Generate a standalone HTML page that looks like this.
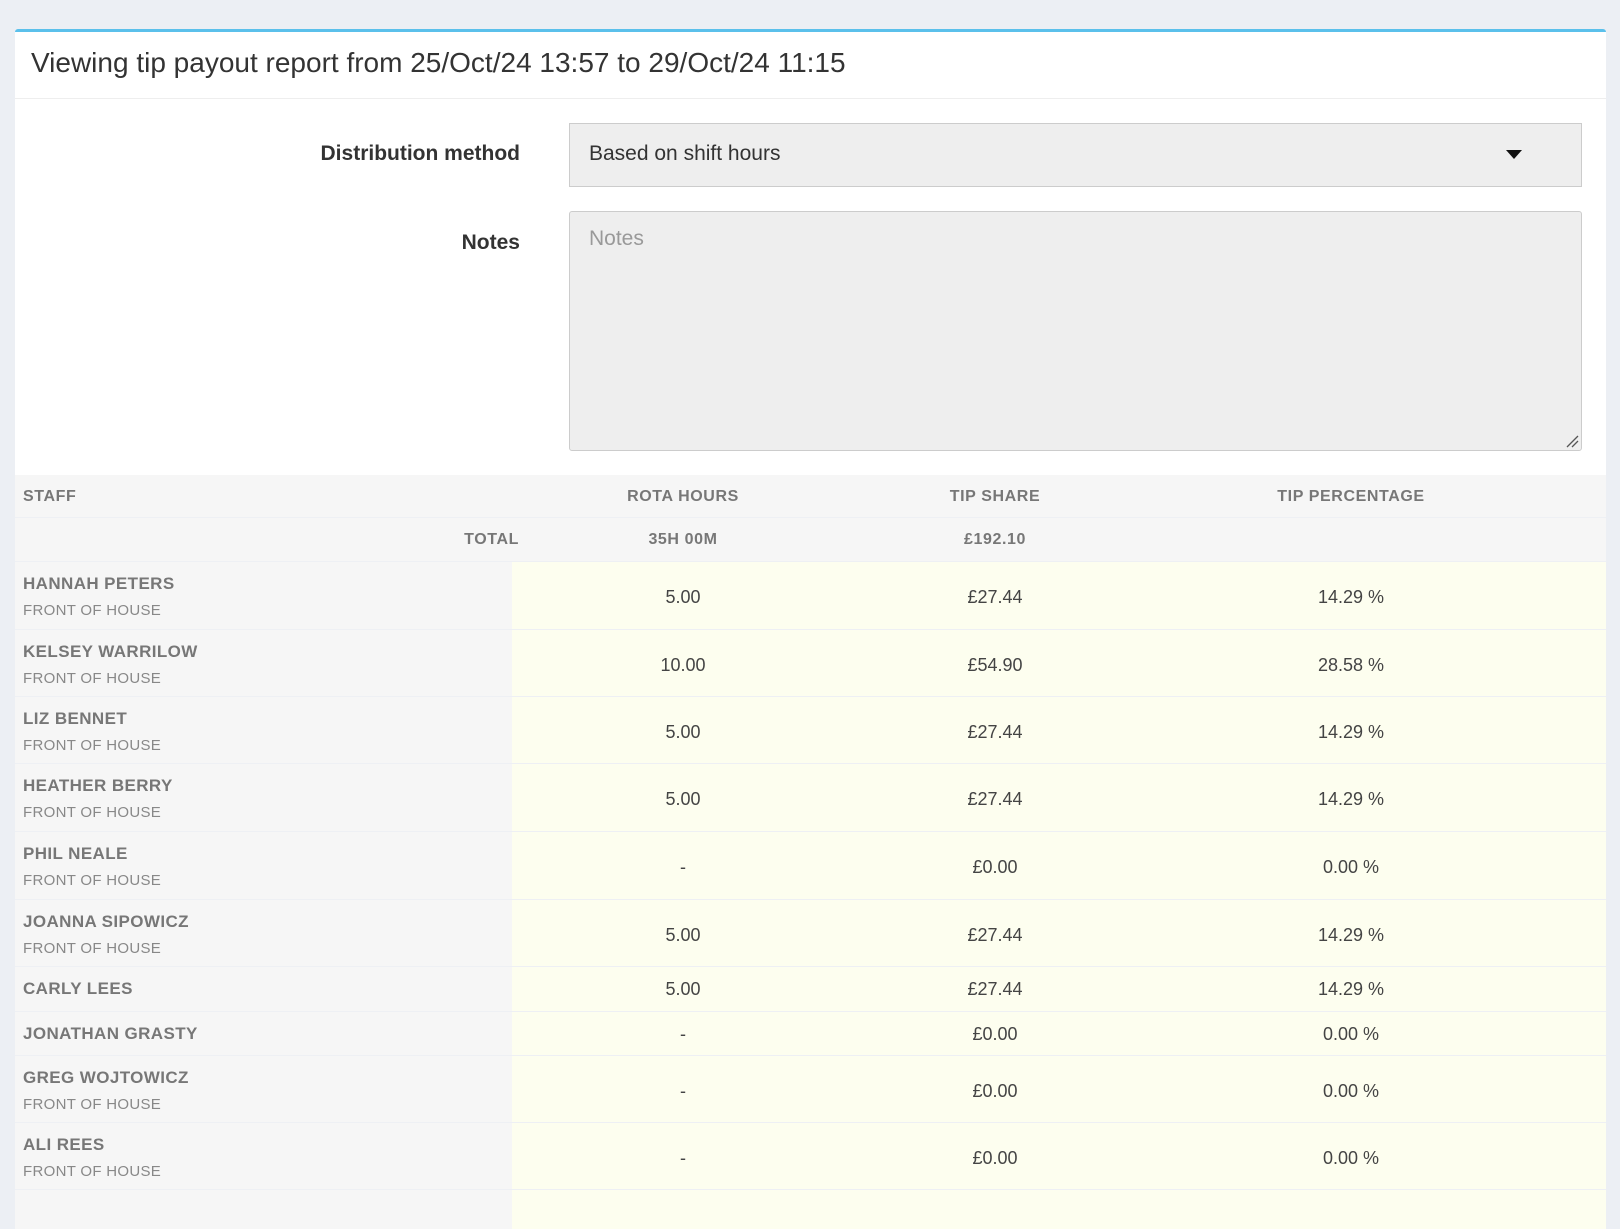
<!DOCTYPE html>
<html><head><meta charset="utf-8"><style>
*{box-sizing:border-box;margin:0;padding:0}
body{width:1620px;height:1198px;background:#eceff4;font-family:"Liberation Sans",Arial,sans-serif;position:relative;overflow:hidden}
.card{position:absolute;left:15px;top:29px;width:1591px;height:1200px;background:#fff;border-top:3px solid #5bc0eb;border-radius:3px 3px 0 0;overflow:hidden}
.title{position:absolute;left:16px;top:15px;font-size:28px;color:#333;white-space:nowrap}
.hr{position:absolute;left:0;right:0;top:66px;border-top:1px solid #eee}
.lbl{position:absolute;right:1086px;font-size:21px;font-weight:bold;color:#333;white-space:nowrap}
.sel{position:absolute;left:554px;top:91px;width:1013px;height:64px;background:#eee;border:1px solid #ccc;font-size:21px;color:#333;padding:18px 19px}
.arrow{position:absolute;right:59px;top:26px;width:0;height:0;border-left:8px solid transparent;border-right:8px solid transparent;border-top:9px solid #111}
.ta{position:absolute;left:554px;top:179px;width:1013px;height:240px;background:#eee;border:1px solid #ccc;border-radius:3px;font-size:21px;color:#999;padding:15px 19px}
.row{position:absolute;left:0;width:1591px;border-bottom:1px solid #eef0f4}
.st{position:absolute;left:0;top:0;bottom:0;width:497px;background:#f6f6f6}
.val{position:absolute;left:497px;top:0;bottom:0;right:0;background:#fdfeef}
.c{position:absolute;transform:translateX(-50%);white-space:nowrap;font-size:18px;color:#444}
.name{position:absolute;left:8px;font-size:17px;font-weight:bold;color:#777;letter-spacing:.4px;white-space:nowrap}
.sub{position:absolute;left:8px;font-size:15px;color:#888;letter-spacing:.3px;white-space:nowrap}
.h{font-size:16px;font-weight:bold;color:#777;letter-spacing:.6px}
</style></head><body>
<div class="card">
<div class="title">Viewing tip payout report from 25/Oct/24 13:57 to 29/Oct/24 11:15</div>
<div class="hr"></div>
<div class="lbl" style="top:110px">Distribution method</div>
<div class="sel">Based on shift hours<div class="arrow"></div></div>
<div class="lbl" style="top:199px">Notes</div>
<div class="ta">Notes
<svg style="position:absolute;right:2px;bottom:2px" width="14" height="14"><path d="M2 13L13 2M7 13L13 7" stroke="#555" stroke-width="1.3"/></svg></div>

<div class="row" style="top:443px;height:43px;background:#f6f6f6">
<div class="name h" style="top:13px">STAFF</div>
<div class="c h" style="left:668px;top:13px">ROTA HOURS</div>
<div class="c h" style="left:980px;top:13px">TIP SHARE</div>
<div class="c h" style="left:1336px;top:13px">TIP PERCENTAGE</div>
</div>
<div class="row" style="top:486px;height:44px;background:#f6f6f6">
<div class="h" style="position:absolute;right:1087px;top:13px">TOTAL</div>
<div class="c h" style="left:668px;top:13px">35H 00M</div>
<div class="c h" style="left:980px;top:13px">£192.10</div>
</div>

<div class="row" style="top:530px;height:68px"><div class="st"></div><div class="val"></div><div class="name" style="top:12px">HANNAH PETERS</div><div class="sub" style="top:40px">FRONT OF HOUSE</div><div class="c" style="left:668px;top:25px">5.00</div><div class="c" style="left:980px;top:25px">£27.44</div><div class="c" style="left:1336px;top:25px">14.29 %</div></div>
<div class="row" style="top:598px;height:67px"><div class="st"></div><div class="val"></div><div class="name" style="top:12px">KELSEY WARRILOW</div><div class="sub" style="top:40px">FRONT OF HOUSE</div><div class="c" style="left:668px;top:25px">10.00</div><div class="c" style="left:980px;top:25px">£54.90</div><div class="c" style="left:1336px;top:25px">28.58 %</div></div>
<div class="row" style="top:665px;height:67px"><div class="st"></div><div class="val"></div><div class="name" style="top:12px">LIZ BENNET</div><div class="sub" style="top:40px">FRONT OF HOUSE</div><div class="c" style="left:668px;top:25px">5.00</div><div class="c" style="left:980px;top:25px">£27.44</div><div class="c" style="left:1336px;top:25px">14.29 %</div></div>
<div class="row" style="top:732px;height:68px"><div class="st"></div><div class="val"></div><div class="name" style="top:12px">HEATHER BERRY</div><div class="sub" style="top:40px">FRONT OF HOUSE</div><div class="c" style="left:668px;top:25px">5.00</div><div class="c" style="left:980px;top:25px">£27.44</div><div class="c" style="left:1336px;top:25px">14.29 %</div></div>
<div class="row" style="top:800px;height:68px"><div class="st"></div><div class="val"></div><div class="name" style="top:12px">PHIL NEALE</div><div class="sub" style="top:40px">FRONT OF HOUSE</div><div class="c" style="left:668px;top:25px">-</div><div class="c" style="left:980px;top:25px">£0.00</div><div class="c" style="left:1336px;top:25px">0.00 %</div></div>
<div class="row" style="top:868px;height:67px"><div class="st"></div><div class="val"></div><div class="name" style="top:12px">JOANNA SIPOWICZ</div><div class="sub" style="top:40px">FRONT OF HOUSE</div><div class="c" style="left:668px;top:25px">5.00</div><div class="c" style="left:980px;top:25px">£27.44</div><div class="c" style="left:1336px;top:25px">14.29 %</div></div>
<div class="row" style="top:935px;height:45px"><div class="st"></div><div class="val"></div><div class="name" style="top:12px">CARLY LEES</div><div class="c" style="left:668px;top:12px">5.00</div><div class="c" style="left:980px;top:12px">£27.44</div><div class="c" style="left:1336px;top:12px">14.29 %</div></div>
<div class="row" style="top:980px;height:44px"><div class="st"></div><div class="val"></div><div class="name" style="top:12px">JONATHAN GRASTY</div><div class="c" style="left:668px;top:12px">-</div><div class="c" style="left:980px;top:12px">£0.00</div><div class="c" style="left:1336px;top:12px">0.00 %</div></div>
<div class="row" style="top:1024px;height:67px"><div class="st"></div><div class="val"></div><div class="name" style="top:12px">GREG WOJTOWICZ</div><div class="sub" style="top:40px">FRONT OF HOUSE</div><div class="c" style="left:668px;top:25px">-</div><div class="c" style="left:980px;top:25px">£0.00</div><div class="c" style="left:1336px;top:25px">0.00 %</div></div>
<div class="row" style="top:1091px;height:67px"><div class="st"></div><div class="val"></div><div class="name" style="top:12px">ALI REES</div><div class="sub" style="top:40px">FRONT OF HOUSE</div><div class="c" style="left:668px;top:25px">-</div><div class="c" style="left:980px;top:25px">£0.00</div><div class="c" style="left:1336px;top:25px">0.00 %</div></div>
<div class="row" style="top:1158px;height:67px"><div class="st"></div><div class="val"></div></div>
</div>
</body></html>
